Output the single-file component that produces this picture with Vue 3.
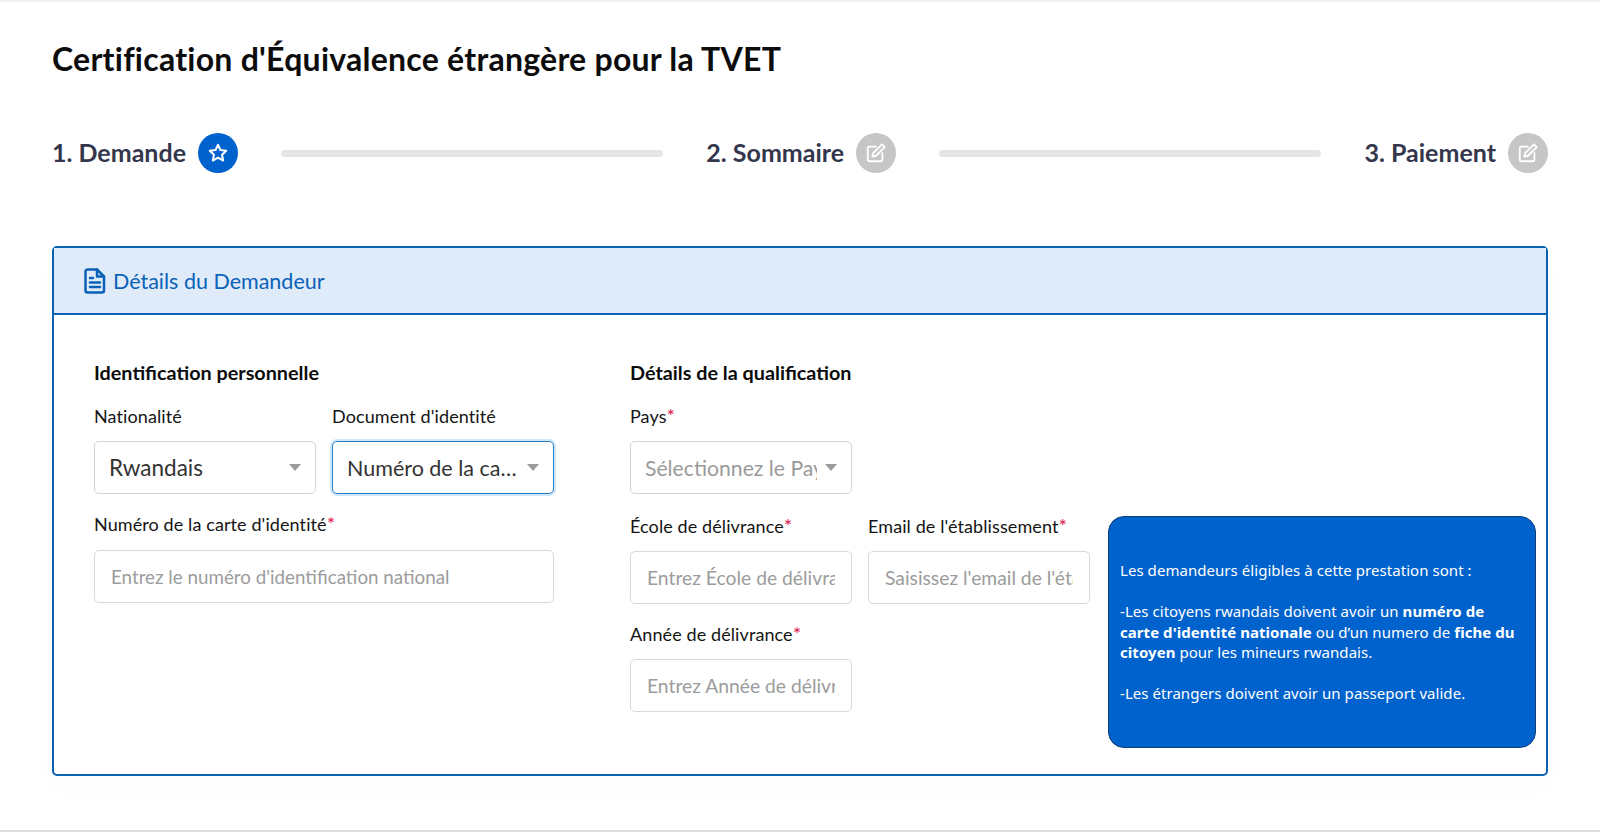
<template>
  <div class="page">
    <h1 class="title">Certification d'Équivalence étrangère pour la TVET</h1>

    <div class="steps">
      <template v-for="(step, i) in steps" :key="step.label">
        <div class="step">
          <span class="step-label">{{ step.label }}</span>
          <span class="step-icon" :class="{ active: step.active }">
            <svg v-if="step.active" width="22" height="22" viewBox="0 0 24 24" fill="none" stroke="#fff" stroke-width="2.2" stroke-linejoin="round">
              <path d="M12 3l2.7 5.8 6.3.8-4.6 4.3 1.2 6.3L12 17.1l-5.6 3.1 1.2-6.3L3 9.6l6.3-.8z" />
            </svg>
            <svg v-else width="22" height="22" viewBox="0 0 24 24" fill="none" stroke="#fff" stroke-width="2" stroke-linecap="round" stroke-linejoin="round">
              <path d="M12 5H5a2 2 0 0 0-2 2v12a2 2 0 0 0 2 2h12a2 2 0 0 0 2-2v-7" />
              <path d="M18.5 2.5l3 3L12 15l-4 1 1-4z" />
            </svg>
          </span>
        </div>
        <div v-if="i < steps.length - 1" class="step-line"></div>
      </template>
    </div>

    <section class="panel">
      <header class="panel-head">
        <svg width="22" height="26" viewBox="0 0 22 26" fill="none" stroke="#0a62b8" stroke-width="2.5" stroke-linejoin="round" stroke-linecap="round">
          <path d="M3.5 1.5h9.500l7 7v14a2 2 0 0 1-2 2H3.500a2 2 0 0 1-2-2v-19a2 2 0 0 1 2-2z" />
          <path d="M13 1.500v7h7" />
          <path d="M6 10h3M6 14.500h10M6 19h10" />
        </svg>
        <span>Détails du Demandeur</span>
      </header>

      <div class="panel-body">
        <div class="left">
          <h2>Identification personnelle</h2>
          <div class="two">
            <div class="field">
              <label>Nationalité</label>
              <div class="select"><span class="value filled">Rwandais</span><i class="caret"></i></div>
            </div>
            <div class="field">
              <label>Document d'identité</label>
              <div class="select focused"><span class="value ellipsis">Numéro de la carte d'identité</span><i class="caret"></i></div>
            </div>
          </div>
          <div class="field id-field">
            <label>Numéro de la carte d'identité<em>*</em></label>
            <input class="input" placeholder="Entrez le numéro d'identification national" />
          </div>
        </div>

        <div class="right">
          <h2>Détails de la qualification</h2>
          <div class="field">
            <label>Pays<em>*</em></label>
            <div class="select"><span class="value muted">Sélectionnez le Pays</span><i class="caret"></i></div>
          </div>
          <div class="lower">
            <div class="lower-fields">
              <div class="field">
                <label>École de délivrance<em>*</em></label>
                <input class="input big" placeholder="Entrez École de délivrance" />
              </div>
              <div class="field">
                <label>Email de l'établissement<em>*</em></label>
                <input class="input big" placeholder="Saisissez l'email de l'établissement" />
              </div>
              <div class="field">
                <label>Année de délivrance<em>*</em></label>
                <input class="input big" placeholder="Entrez Année de délivrance" />
              </div>
            </div>
            <aside class="info">
              <p>Les demandeurs éligibles à cette prestation sont :</p>
              <p>-Les citoyens rwandais doivent avoir un <b>numéro de carte d'identité nationale</b> ou d’un numero de <b>fiche du citoyen</b> pour les mineurs rwandais.</p>
              <p>-Les étrangers doivent avoir un passeport valide.</p>
            </aside>
          </div>
        </div>
      </div>
    </section>
  </div>
</template>

<script setup>
const steps = [
  { label: '1. Demande', active: true },
  { label: '2. Sommaire', active: false },
  { label: '3. Paiement', active: false }
]
</script>

<style>
html, body { margin: 0; background: #fff; }
</style>

<style scoped>
* { box-sizing: border-box; }
.page {
  height: 832px;
  padding: 0 52px;
  overflow: hidden;
  background: #fff;
  border-top: 2px solid #f3f3f3;
  border-bottom: 2px solid #dcdcdc;
  font-family: Lato, "Noto Sans", sans-serif;
  color: #111;
}
.title {
  margin: 36px 0 0;
  font-size: 32px;
  line-height: 42px;
  font-weight: 700;
  letter-spacing: 0.25px;
  color: #0c0c0c;
}
.steps {
  display: flex;
  align-items: center;
  margin-top: 52px;
  height: 42px;
}
.step { display: flex; align-items: center; gap: 12px; }
.step-label {
  padding-bottom: 2px;
  font-size: 25px;
  font-weight: 700;
  color: #34374c;
  white-space: nowrap;
}
.step-icon {
  width: 40px;
  height: 40px;
  border-radius: 50%;
  background: #c6c6c6;
  display: flex;
  align-items: center;
  justify-content: center;
}
.step-icon.active { background: #0062cc; }
.step-line {
  flex: 1;
  height: 7px;
  margin: 0 43px;
  border-radius: 4px;
  background: #e5e5e5;
}
.panel {
  margin-top: 72px;
  height: 530px;
  border: 2px solid #0a62b0;
  border-radius: 5px;
  box-shadow: 0 12px 30px rgba(0, 0, 0, 0.015);
}
.panel-head {
  height: 67px;
  display: flex;
  align-items: center;
  gap: 7px;
  padding: 0 0 0 30px;
  background: #dfebf8;
  border-bottom: 2px solid #0a62b8;
  color: #0a62b8;
  font-size: 21.500px;
}
.panel-body {
  display: flex;
  padding: 43px 10px 0 40px;
}
.left { width: 460px; margin-right: 76px; }
.right { flex: 1; }
h2 {
  margin: 0;
  font-size: 19.800px;
  line-height: 28px;
  font-weight: 700;
  color: #0c0c0c;
}
.two {
  display: grid;
  grid-template-columns: 222px 222px;
  gap: 16px;
  margin-top: 16px;
}
.field { display: flex; flex-direction: column; min-width: 0; }
.id-field { margin-top: 16px; }
.id-field label { margin-bottom: 12px; }
label {
  font-size: 18px;
  line-height: 28px;
  letter-spacing: 0.1px;
  color: #141414;
  margin-bottom: 11px;
  white-space: nowrap;
}
label em { color: #e0194f; font-style: normal; font-size: 20px; line-height: 20px; }
.right > .field { width: 222px; margin-top: 16px; }
.select {
  height: 53px;
  display: flex;
  align-items: center;
  gap: 8px;
  padding: 0 14px;
  border: 1px solid #d4d4d4;
  border-radius: 5px;
  background: #fff;
}
.select.focused {
  border-color: #2a7fc4;
  box-shadow: 0 0 0 2px rgba(120, 185, 240, 0.35);
}
.value {
  flex: 1;
  min-width: 0;
  overflow: hidden;
  white-space: nowrap;
  font-size: 21.500px;
  color: #333;
}
.value.filled { font-size: 22.500px; }
.value.ellipsis { text-overflow: ellipsis; }
.value.muted { color: #9a9a9a; font-size: 21.200px; }
.caret {
  flex: none;
  width: 0;
  height: 0;
  border-left: 6.500px solid transparent;
  border-right: 6.500px solid transparent;
  border-top: 7px solid #9b9b9b;
}
.input {
  width: 100%;
  height: 53px;
  padding: 0 16px;
  border: 1px solid #d9d9d9;
  border-radius: 5px;
  outline: none;
  font-family: inherit;
  font-size: 18.800px;
  color: #333;
  background: #fff;
}
.input.big { font-size: 19.300px; }
.input::placeholder { color: #9c9c9c; opacity: 1; }
.lower {
  display: flex;
  align-items: flex-start;
  gap: 18px;
  margin-top: 18px;
}
.lower-fields {
  display: grid;
  grid-template-columns: 222px 222px;
  column-gap: 16px;
  row-gap: 16px;
}
.info {
  flex: none;
  width: 428px;
  height: 232px;
  margin-top: 4px;
  padding: 0 11px;
  display: flex;
  flex-direction: column;
  justify-content: center;
  gap: 20.500px;
  background: #0062cc;
  border: 1px solid #123f78;
  border-radius: 16px;
  color: #fff;
  font-family: "Noto Sans", sans-serif;
  font-size: 15px;
  letter-spacing: 0.05px;
  line-height: 20.500px;
}
.info p { margin: 0; }
</style>
